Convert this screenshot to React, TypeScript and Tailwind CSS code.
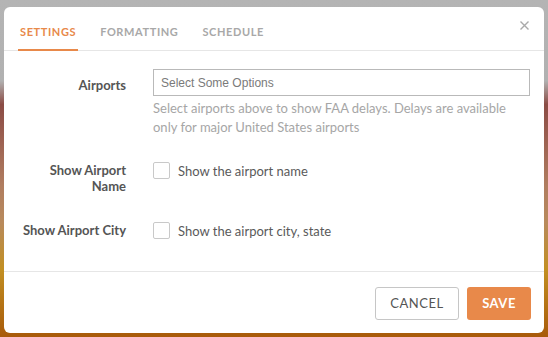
import { useState } from "react";

function Checkbox({ label }: { label: string }) {
    return (
        <label className="flex items-center gap-[8px] cursor-pointer">
            <span className="block w-[17px] h-[17px] border border-[#c9c9c9] rounded-[2px] bg-white" />
            <span className="text-[13px] leading-[16px] text-[#5a5a5a]">{label}</span>
        </label>
    );
}

export default function App() {
    const [tab, setTab] = useState("SETTINGS");
    const tabs = ["SETTINGS", "FORMATTING", "SCHEDULE"];

    return (
        <div
            className="w-[548px] h-[337px] pt-[7px] pl-[4px] overflow-hidden bg-[linear-gradient(180deg,#b4b4b4_0%,#b1b1b1_24%,#8b4c45_31%,#9a5e50_40%,#b07d60_55%,#b88a5c_66%,#c28f22_80%,#a85a0a_100%)]"
            style={{ fontFamily: "Lato, 'Noto Sans', sans-serif" }}
        >
            <div className="w-[540px] h-[326px] bg-white rounded-[6px] flex flex-col">
                {/* header */}
                <div className="relative h-[44px] border-b border-[#e6e6e6] flex items-end pl-[14px] gap-[20px]">
                    {tabs.map((t) => (
                        <button
                            key={t}
                            onClick={() => setTab(t)}
                            className={
                                "px-[2px] pb-[9px] -mb-px text-[11px] font-bold tracking-[0.6px] border-b-2 " +
                                (tab === t
                                    ? "text-[#e8894a] border-[#e8894a]"
                                    : "text-[#a8a8a8] border-transparent")
                            }
                        >
                            {t}
                        </button>
                    ))}
                    <svg
                        className="absolute right-[15px] top-[14px]"
                        width="9"
                        height="9"
                        viewBox="0 0 9 9"
                        stroke="#aaaaaa"
                        strokeWidth="1.4"
                    >
                        <path d="M0.5 0.5L8.5 8.5M8.5 0.5L0.5 8.5" />
                    </svg>
                </div>

                {/* body */}
                <div className="flex-1 pl-[16px] pr-[14px] pt-[18px]">
                    <div className="grid grid-cols-[106px_1fr] gap-x-[27px]">
                        <div className="text-right text-[13px] font-bold text-[#555] leading-[16px] pt-[8px]">
                            Airports
                        </div>
                        <div>
                            <div className="h-[27px] border border-[#b9b9b9] flex items-center px-[7px] text-[12px] text-[#7a7a7a]" style={{ fontFamily: "'Liberation Sans', Arial, sans-serif" }}>
                                Select Some Options
                            </div>
                            <p className="mt-[3px] text-[13px] leading-[19px] text-[#a6a6a6]">
                                Select airports above to show FAA delays. Delays are available only for major United States airports
                            </p>
                        </div>

                        <div className="mt-[25px] text-right text-[13px] font-bold text-[#555] leading-[16px]">
                            Show Airport Name
                        </div>
                        <div className="mt-[25px]">
                            <Checkbox label="Show the airport name" />
                        </div>

                        <div className="mt-[28px] text-right text-[13px] font-bold text-[#555] leading-[16px] whitespace-nowrap">
                            Show Airport City
                        </div>
                        <div className="mt-[28px]">
                            <Checkbox label="Show the airport city, state" />
                        </div>
                    </div>
                </div>

                {/* footer */}
                <div className="h-[62px] border-t border-[#e6e6e6] flex items-start justify-end gap-[8px] pt-[15px] pr-[13px]">
                    <button className="h-[33px] w-[84px] border border-[#c6c6c6] rounded-[3px] text-[13px] tracking-[0.5px] text-[#555]">
                        CANCEL
                    </button>
                    <button className="h-[33px] w-[64px] rounded-[3px] bg-[#e8894a] text-[13px] font-bold tracking-[0.5px] text-white">
                        SAVE
                    </button>
                </div>
            </div>
        </div>
    );
}
